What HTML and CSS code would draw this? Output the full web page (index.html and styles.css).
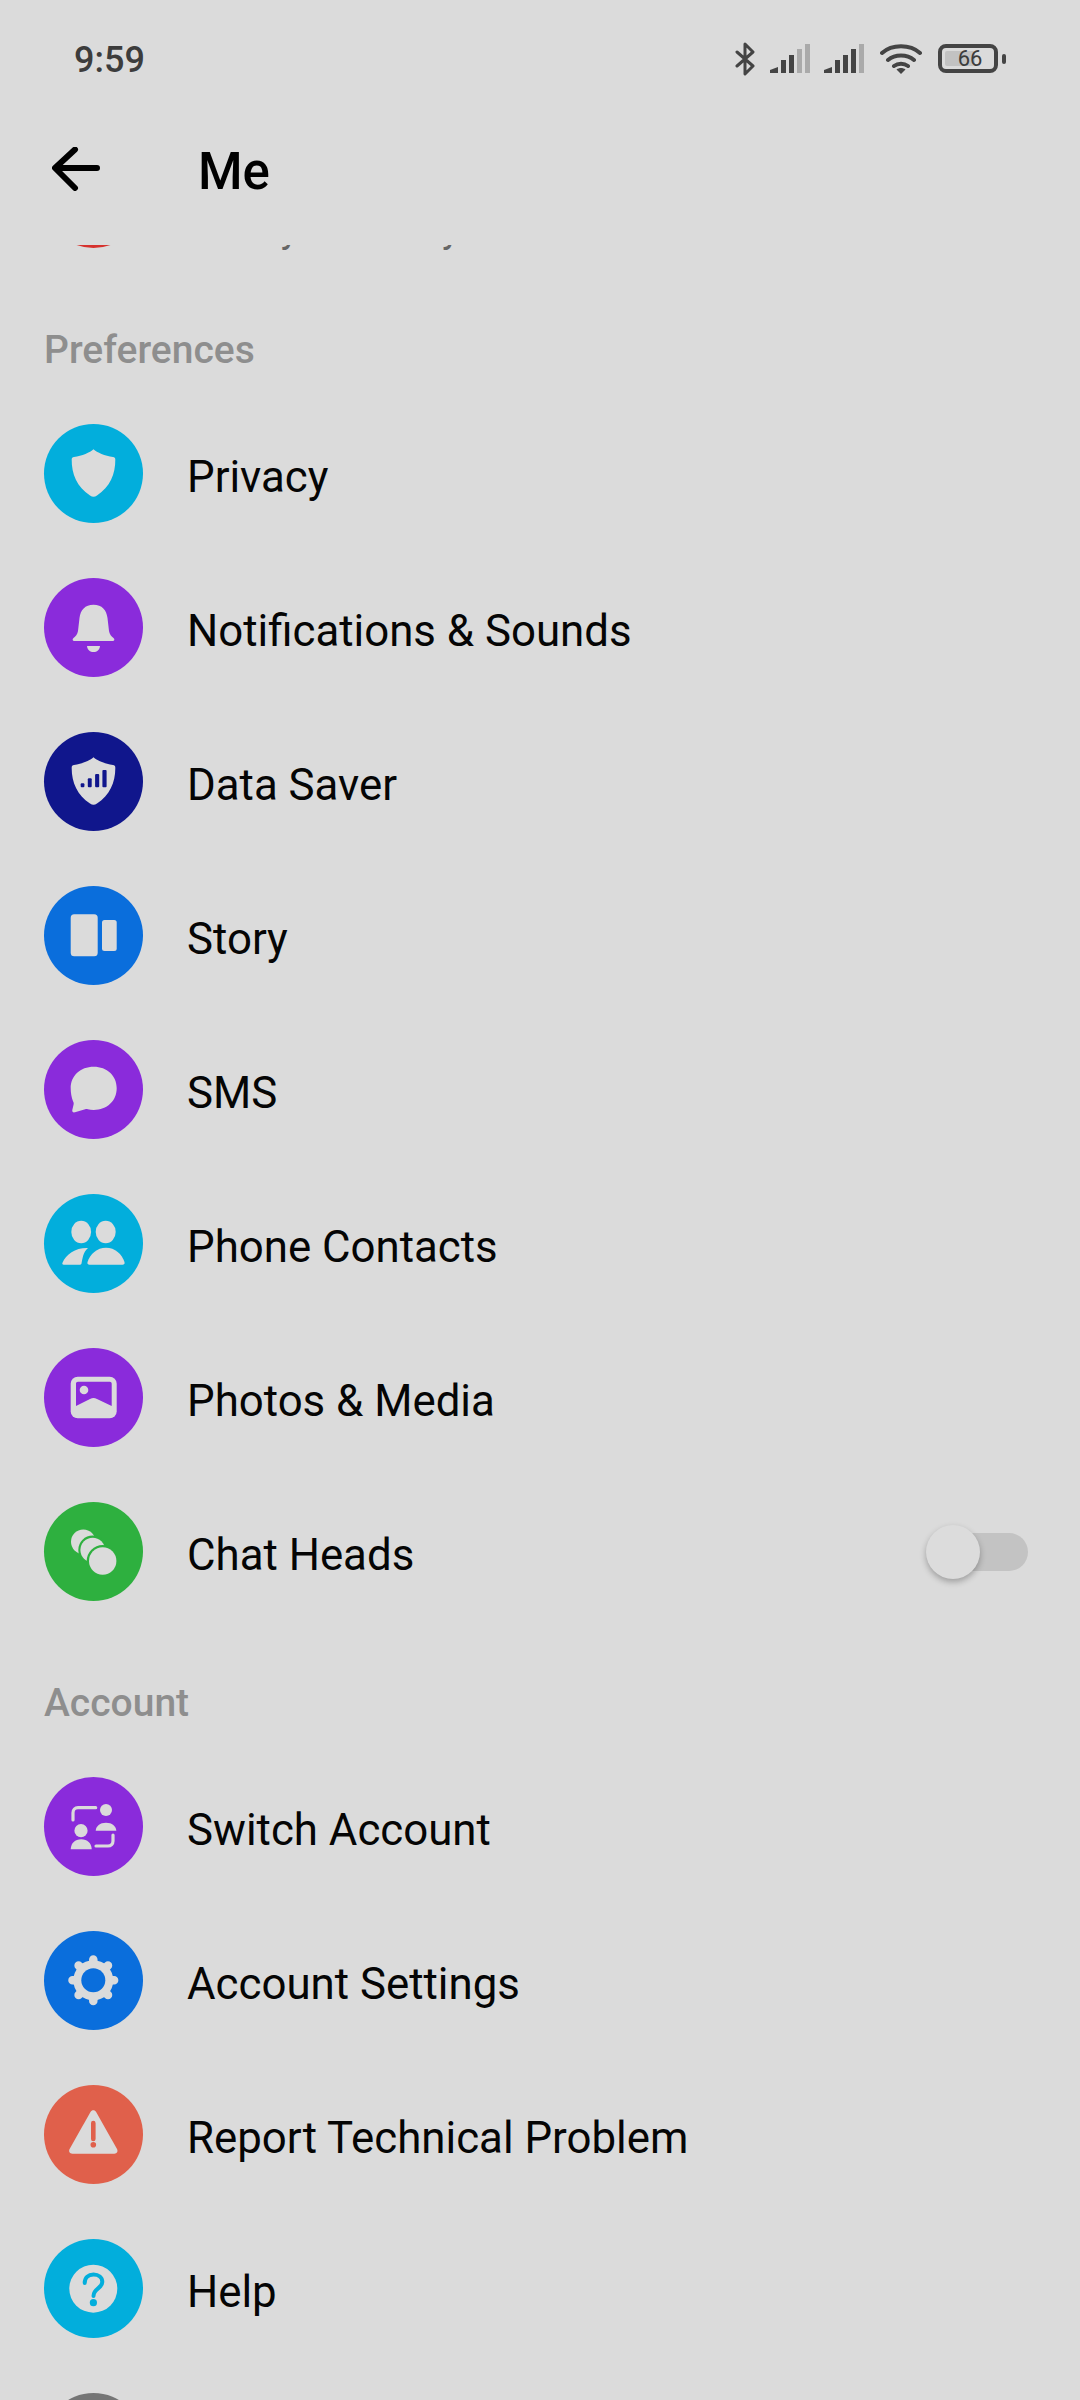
FILE: index.html
```html
<!DOCTYPE html>
<html lang="en">

<head>
<meta charset="UTF-8">
<meta name="viewport" content="width=device-width, initial-scale=1.0">
<title>Me</title>
<link rel="stylesheet" href="styles.css"></head>

<body>
<div class="page">

<!-- Status bar -->
<div class="status-bar">
<span class="time">9:59</span>
<div class="status-icons">
<svg class="st-bluetooth" width="21" height="34" viewBox="0 0 21 34"><path d="M2 10 L18 24 L10 32 V2 L18 10 L2 24" fill="none" stroke="#444" stroke-width="3" stroke-linecap="round" stroke-linejoin="round"/></svg>
<svg class="st-signal" width="40" height="29" viewBox="0 0 40 29"><path d="M0 29 V26 L8 23 V29Z" fill="#444"/><rect x="11" y="16" width="5" height="13" fill="#444"/><rect x="19" y="11" width="5" height="18" fill="#444"/><rect x="27" y="5" width="5" height="24" fill="#aaa"/><rect x="35" y="0" width="5" height="29" fill="#aaa"/></svg>
<svg class="st-signal" width="40" height="29" viewBox="0 0 40 29"><path d="M0 29 V26 L8 23 V29Z" fill="#444"/><rect x="11" y="16" width="5" height="13" fill="#444"/><rect x="19" y="11" width="5" height="18" fill="#444"/><rect x="27" y="5" width="5" height="24" fill="#444"/><rect x="35" y="0" width="5" height="29" fill="#aaa"/></svg>
<svg class="st-wifi" width="42" height="30" viewBox="0 0 42 30"><path d="M2 9 C12 0 30 0 40 9 M8 16 C15 10 27 10 34 16 M14 22 C18 19 24 19 28 22" fill="none" stroke="#444" stroke-width="4" stroke-linecap="round"/><path d="M21 30 L16.500 25.500 C19 23.500 23 23.500 25.500 25.500Z" fill="#444"/></svg>
<div class="battery">
<div class="battery-body"><div class="battery-fill"></div><span class="battery-num">66</span></div>
<div class="battery-nub"></div>
</div>
</div>
</div>

<!-- App bar -->
<div class="app-bar">
<svg class="back" width="48" height="44" viewBox="0 0 48 44"><path d="M45 21 H4 M23 2.500 L3 21 L23 41" fill="none" stroke="#000" stroke-width="6" stroke-linecap="round" stroke-linejoin="round"/></svg>
<h1>Me</h1>
</div>

<div class="list">

<div class="row first-row">
<div class="icon red"></div>
<span class="sub">Family Directory</span>
</div>

<!-- Preferences -->
<div class="section-title">Preferences</div>

<div class="row">
<div class="icon cyan">
<svg viewBox="0 0 99 99"><path class="light" d="M49.500 25.300 C53 28.500 61 32 69 33 C70.500 33.200 71.300 34 71.300 35.500 C71.500 50 66 63 53 71.500 C50.500 73.200 48.500 73.200 46 71.500 C33 63 27.500 50 27.700 35.500 C27.700 34 28.500 33.200 30 33 C38 32 46 28.500 49.500 25.300Z"/></svg>
</div>
<span class="label">Privacy</span>
</div>

<div class="row">
<div class="icon purple">
<svg viewBox="0 0 99 99"><path class="light" d="M49.500 26.700 C58 26.700 62.500 32 63.500 40 L65 53 C65.500 56.500 67.500 58.500 69.500 60 C71 61.200 70.500 63 68.700 63 H30.300 C28.500 63 28 61.200 29.500 60 C31.500 58.500 33.500 56.500 34 53 L35.500 40 C36.500 32 41 26.700 49.500 26.700Z"/><path class="light" d="M43 68 H56 C55.500 72 53 74 49.500 74 C46 74 43.500 72 43 68Z"/></svg>
</div>
<span class="label">Notifications &amp; Sounds</span>
</div>

<div class="row">
<div class="icon navy">
<svg viewBox="0 0 99 99"><path class="light" d="M49.500 25.300 C53 28.500 61 32 69 33 C70.500 33.200 71.300 34 71.300 35.500 C71.500 50 66 63 53 71.500 C50.500 73.200 48.500 73.200 46 71.500 C33 63 27.500 50 27.700 35.500 C27.700 34 28.500 33.200 30 33 C38 32 46 28.500 49.500 25.300Z"/><g fill="#10168c"><rect x="36.700" y="51.300" width="3.700" height="4" rx="1"/><rect x="43.800" y="46.300" width="3.900" height="9" rx="1"/><rect x="51.100" y="42" width="4.100" height="13.300" rx="1"/><rect x="58.400" y="38" width="4.200" height="17.300" rx="1"/></g></svg>
</div>
<span class="label">Data Saver</span>
</div>

<div class="row">
<div class="icon blue">
<svg viewBox="0 0 99 99"><rect class="light" x="26.700" y="28.300" width="27" height="42" rx="3.500"/><rect class="light" x="58" y="34" width="14.700" height="31" rx="2.500"/></svg>
</div>
<span class="label">Story</span>
</div>

<div class="row">
<div class="icon purple">
<svg viewBox="0 0 99 99"><path class="light" d="M49.700 26.700 C63 26.700 72.700 35.500 72.700 48.300 C72.700 61 63 70 49.700 70 C47.500 70 45.500 69.700 43.800 69.200 C42.800 68.900 42 69 41.200 69.300 L31 72.300 C29 72.800 28 71.800 28.300 70 L29.600 64.500 C29.900 63.200 29.600 62.300 29 61.300 C27.500 57.500 26.700 53 26.700 48.300 C26.700 35.500 36.400 26.700 49.700 26.700Z"/></svg>
</div>
<span class="label">SMS</span>
</div>

<div class="row">
<div class="icon cyan">
<svg viewBox="0 0 99 99"><ellipse class="light" cx="37.200" cy="38" rx="9.900" ry="11.300"/><ellipse class="light" cx="61.700" cy="38" rx="10" ry="11.300"/><path class="light" d="M44 54 C39 58 38.500 65 37.500 69.500 C37.300 70.300 36.800 70.700 36 70.700 H19.800 C18.500 70.700 18 69.800 18.500 68.700 C22 60 32 53.500 44 54Z"/><path class="light" d="M62 53.700 C71 53.700 78 60 80.500 68 C81 69.700 80 70.700 78.500 70.700 H45.500 C44 70.700 43 69.700 43.500 68 C46 60 53 53.700 62 53.700Z"/></svg>
</div>
<span class="label">Phone Contacts</span>
</div>

<div class="row">
<div class="icon purple">
<svg viewBox="0 0 99 99"><rect class="light" x="26.700" y="28.700" width="46" height="41.600" rx="7"/><path d="M34 33.700 H65.700 C67 33.700 67.700 34.400 67.700 35.700 V58 L53 51 C50.500 49.800 48.500 49.800 46 51 L32 58 V35.700 C32 34.400 32.700 33.700 34 33.700Z" fill="#8a2bdb"/><circle class="light" cx="40" cy="42" r="4.300"/></svg>
</div>
<span class="label">Photos &amp; Media</span>
</div>

<div class="row">
<div class="icon green">
<svg viewBox="0 0 99 99"><circle class="light" cx="39.300" cy="39.700" r="12.300"/><circle cx="48.700" cy="48" r="14.400" fill="#2eb03f"/><circle class="light" cx="48.700" cy="48" r="12.300"/><circle cx="58.700" cy="59" r="16" fill="#2eb03f"/><circle class="light" cx="58.700" cy="59" r="13.700"/></svg>
</div>
<span class="label">Chat Heads</span>
<div class="toggle">
<div class="toggle-track"></div>
<div class="toggle-thumb"></div>
</div>
</div>

<!-- Account -->
<div class="section-title">Account</div>

<div class="row">
<div class="icon purple">
<svg viewBox="0 0 99 99"><circle class="light" cx="62" cy="33" r="6"/><path class="light" d="M51.700 53.700 C52 49 56 45.700 62 45.700 C68 45.700 72 49 72.300 53.700Z"/><circle class="light" cx="37" cy="53.700" r="6.600"/><path class="light" d="M26.700 72.300 C27 66 31 62.300 37.200 62.300 C43.400 62.300 47.400 66 47.700 72.300Z"/><path d="M51.700 30.700 H34 C31 30.700 29 32.700 29 35.700 V43 M69 58 V64 C69 67 67 69 64 69 H52" fill="none" stroke="#dbdbdb" stroke-width="3.200" stroke-linecap="round"/></svg>
</div>
<span class="label">Switch Account</span>
</div>

<div class="row">
<div class="icon blue">
<svg viewBox="0 0 99 99"><path d="M49.300 28.500 V70.100 M28.500 49.300 H70.100 M34.600 34.600 L64 64 M64 34.600 L34.600 64" fill="none" stroke="#dbdbdb" stroke-width="8.500" stroke-linecap="round"/><circle class="light" cx="49.300" cy="49.300" r="20"/><circle cx="49.300" cy="49.300" r="12" fill="#0a6edc"/></svg>
</div>
<span class="label">Account Settings</span>
</div>

<div class="row">
<div class="icon red-soft">
<svg viewBox="0 0 99 99"><path class="light" d="M46.500 27 C47.800 24.800 50.800 24.800 52.100 27 L73 64 C74.200 66.300 73 68.700 70.300 68.700 H28.300 C25.600 68.700 24.400 66.300 25.600 64 Z"/><path d="M49.300 38 V54" stroke="#e0604b" stroke-width="4.600" stroke-linecap="round"/><circle cx="49.300" cy="59.800" r="2.800" fill="#e0604b"/></svg>
</div>
<span class="label">Report Technical Problem</span>
</div>

<div class="row">
<div class="icon cyan">
<svg viewBox="0 0 99 99"><circle class="light" cx="49.300" cy="49.700" r="24"/><path d="M40.700 44 C40.700 38.500 44.500 35.500 49.500 35.500 C54.500 35.500 58.300 38.500 58.300 43 C58.300 49.500 49.500 49.500 49.500 57" fill="none" stroke="#02aedc" stroke-width="4" stroke-linecap="round"/><circle cx="49.400" cy="63.700" r="3.600" fill="#02aedc"/></svg>
</div>
<span class="label">Help</span>
</div>

<div class="row">
<div class="icon gray"></div>
</div>

</div>
</div>
</body>

</html>
```

FILE: styles.css
```css
html, body {
  margin: 0;
  padding: 0;
  height: 2400px;
  overflow: hidden;
}

body {
  font-family: 'Roboto', sans-serif;
  background-color: #dbdbdb;
  color: #050505;
}

.page {
  height: 2400px;
  display: flex;
  flex-direction: column;
}

/* Status bar */
.status-bar {
  height: 116px;
  flex-shrink: 0;
  display: flex;
  justify-content: space-between;
  padding: 0 74px 0 74px;
  box-sizing: border-box;
}

.time {
  margin-top: 39px;
  font-size: 36px;
  line-height: 42px;
  font-weight: 500;
  color: #3c3c3c;
}

.status-icons {
  display: flex;
  align-items: flex-start;
  margin-top: 44px;
}

.st-bluetooth {
  margin-top: -2px;
  margin-right: 14px;
}

.st-signal {
  margin-right: 14px;
}

.st-wifi {
  margin-left: 2px;
  margin-right: 16px;
}

.battery {
  display: flex;
  align-items: center;
}

.battery-body {
  width: 60px;
  height: 29px;
  box-sizing: border-box;
  border: 4px solid #444;
  border-radius: 8px;
  position: relative;
  display: flex;
  align-items: center;
  justify-content: center;
}

.battery-fill {
  position: absolute;
  left: 3px;
  top: 3px;
  bottom: 3px;
  width: 30px;
  background-color: #c2c2c2;
  border-radius: 2px;
}

.battery-num {
  position: relative;
  font-size: 22px;
  line-height: 21px;
  color: #3c3c3c;
  margin-left: 4px;
}

.battery-nub {
  width: 4px;
  height: 10px;
  margin-left: 4px;
  background-color: #444;
  border-radius: 2px;
}

/* App bar */
.app-bar {
  height: 129px;
  flex-shrink: 0;
  display: flex;
  align-items: flex-start;
  padding-left: 52px;
  box-sizing: border-box;
}

.back {
  margin-top: 31px;
}

.app-bar h1 {
  margin: 26px 0 0 98px;
  font-size: 51px;
  line-height: 60px;
  font-weight: 500;
  color: #000;
}

/* List */
.list {
  flex: 1;
  overflow: hidden;
}

.first-row {
  margin-top: -123px;
}

.row {
  height: 154px;
  padding: 27px 52px 28px 44px;
  box-sizing: border-box;
  display: flex;
  align-items: center;
}

.section-title {
  height: 121px;
  padding: 51px 0 0 44px;
  box-sizing: border-box;
  font-size: 39px;
  line-height: 46px;
  font-weight: 500;
  color: #8e8e8e;
}

.icon {
  width: 99px;
  height: 99px;
  flex-shrink: 0;
  border-radius: 50%;
}

.icon svg {
  display: block;
  width: 99px;
  height: 99px;
}

.light {
  fill: #dbdbdb;
}

.cyan { background-color: #02aedc; }
.purple { background-color: #8a2bdb; }
.navy { background-color: #10168c; }
.blue { background-color: #0a6edc; }
.green { background-color: #2eb03f; }
.red { background-color: #d6322e; }
.red-soft { background-color: #e0604b; }
.gray { background-color: #757575; }

.label {
  margin-left: 44px;
  padding-top: 7px;
  font-size: 43.8px;
  line-height: 52px;
}

/* Second line of the row that is scrolled away under the app bar */
.sub {
  align-self: flex-start;
  margin: 58px 0 0 45px;
  font-size: 38px;
  line-height: 44px;
  color: #666;
}

/* Chat heads switch */
.toggle {
  margin-left: auto;
  width: 102px;
  height: 54px;
  position: relative;
}

.toggle-track {
  position: absolute;
  right: 0;
  top: 8px;
  width: 88px;
  height: 38px;
  border-radius: 19px;
  background-color: #c3c3c3;
}

.toggle-thumb {
  position: absolute;
  left: 0;
  top: 0;
  width: 54px;
  height: 54px;
  border-radius: 50%;
  background-color: #dcdcdc;
  box-shadow: 0 3px 6px rgba(0, 0, 0, 0.28);
}
```
